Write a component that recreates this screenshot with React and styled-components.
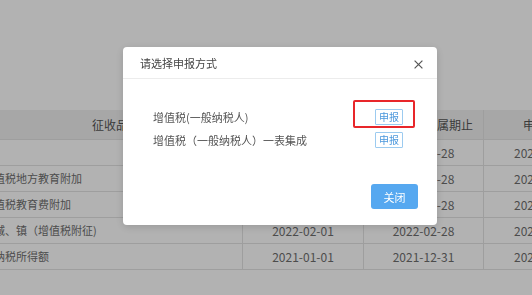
import React from "react";
import styled, { createGlobalStyle } from "styled-components";

const Global = createGlobalStyle`
  html, body { margin: 0; padding: 0; background: #fff; overflow: hidden; }
  body { font-family: "Noto Sans CJK SC", "Noto Sans", sans-serif; }
`;

const Page = styled.div`
  width: 532px;
  height: 295px;
  padding-top: 110px;
  box-sizing: border-box;
  overflow: hidden;
`;

const Table = styled.div`
  margin-left: -4px;
  width: 620px;
  display: grid;
  grid-template-columns: 247px 121px 120px 132px;
`;

const HeadCell = styled.div`
  height: 29px;
  background: #f0f0f0;
  border-bottom: 1px solid #e3e3e3;
  border-right: ${(p) => (p.$divider ? "1px solid #e3e3e3" : "none")};
  font-size: 12px;
  color: #555;
  line-height: 29px;
  white-space: nowrap;
  overflow: hidden;
  box-sizing: content-box;
  text-align: ${(p) => p.$align || "center"};
  padding-left: ${(p) => p.$pl || 0}px;
  padding-right: ${(p) => p.$pr || 0}px;
`;

const Cell = styled.div`
  height: 25px;
  border-bottom: 1px solid #e3e3e3;
  border-right: ${(p) => (p.$divider ? "1px solid #e3e3e3" : "none")};
  font-size: ${(p) => p.$fs || 12}px;
  color: #6e6e6e;
  line-height: 25px;
  white-space: nowrap;
  overflow: hidden;
  text-align: ${(p) => p.$align || "center"};
  padding-left: ${(p) => p.$pl || 0}px;
  text-indent: ${(p) => p.$indent || 0}px;
`;

const Overlay = styled.div`
  position: fixed;
  inset: 0;
  background: rgba(0, 0, 0, 0.3);
`;

const Modal = styled.div`
  position: absolute;
  left: 123px;
  top: 47px;
  width: 314px;
  height: 178px;
  background: #fff;
  border-radius: 4px;
  box-shadow: 0 2px 8px rgba(0, 0, 0, 0.15);
  display: flex;
  flex-direction: column;
`;

const ModalHeader = styled.div`
  height: 31px;
  border-bottom: 1px solid #ececec;
  display: flex;
  align-items: center;
  justify-content: space-between;
  padding: 0 14px 0 17px;
`;

const Title = styled.span`
  font-size: 11px;
  color: #444;
`;

const CloseIcon = styled.svg`
  width: 9px;
  height: 9px;
  margin-top: 3px;
`;

const ModalBody = styled.div`
  padding: 26px 34px 0 30px;
  display: flex;
  flex-direction: column;
`;

const OptionRow = styled.div`
  height: 23px;
  display: flex;
  align-items: center;
  justify-content: space-between;
`;

const OptionLabel = styled.span`
  font-size: 11px;
  color: #555;
`;

const ButtonWrap = styled.span`
  position: relative;
  display: inline-flex;
`;

const ReportButton = styled.button`
  width: 28px;
  height: 16px;
  padding: 0;
  border: 1px solid #9ccbf0;
  border-radius: 1px;
  background: #fff;
  color: #4a97dc;
  font-family: inherit;
  font-size: 10px;
  line-height: 14px;
`;

const Highlight = styled.span`
  position: absolute;
  left: -22px;
  top: -9px;
  width: 62px;
  height: 28px;
  border: 2px solid #e8262a;
  border-radius: 2px;
  box-sizing: border-box;
  pointer-events: none;
`;

const Footer = styled.div`
  margin-top: auto;
  padding: 0 19px 16px;
  display: flex;
  justify-content: flex-end;
`;

const CloseButton = styled.button`
  width: 47px;
  height: 25px;
  border: none;
  border-radius: 3px;
  background: #56a8f0;
  color: #fff;
  font-family: inherit;
  font-size: 11px;
  padding: 0;
`;

const rows = [
  { name: "", start: "2022-02-01", end: "2022-02-28", due: "2022-03-15" },
  { name: "值税地方教育附加", start: "2022-02-01", end: "2022-02-28", due: "2022-03-15" },
  { name: "值税教育费附加", start: "2022-02-01", end: "2022-02-28", due: "2022-03-15" },
  { name: "城、镇（增值税附征)", start: "2022-02-01", end: "2022-02-28", due: "2022-03-15" },
  { name: "纳税所得额", start: "2021-01-01", end: "2021-12-31", due: "2022-05-31" },
];

export default function App() {
  return (
    <>
      <Global />
      <Page>
        <Table>
          <HeadCell $align="left" $pl={96}>征收品目</HeadCell>
          <HeadCell $divider>税款所属期起</HeadCell>
          <HeadCell $divider $align="right" $pr={10}>所属期止</HeadCell>
          <HeadCell $align="left" $pl={39}>申报期限</HeadCell>
          {rows.map((r, i) => (
            <React.Fragment key={i}>
              <Cell $align="left" $fs={11} $indent={-2} $divider>{r.name}</Cell>
              <Cell $divider>{r.start}</Cell>
              <Cell $divider>{r.end}</Cell>
              <Cell $align="left" $pl={30}>{r.due}</Cell>
            </React.Fragment>
          ))}
        </Table>
      </Page>
      <Overlay>
        <Modal>
          <ModalHeader>
            <Title>请选择申报方式</Title>
            <CloseIcon viewBox="0 0 9 9">
              <path d="M0.6 0.6 L8.4 8.4 M8.4 0.6 L0.6 8.4" stroke="#555" strokeWidth="1.2" fill="none" />
            </CloseIcon>
          </ModalHeader>
          <ModalBody>
            <OptionRow>
              <OptionLabel>增值税(一般纳税人)</OptionLabel>
              <ButtonWrap>
                <ReportButton>申报</ReportButton>
                <Highlight />
              </ButtonWrap>
            </OptionRow>
            <OptionRow>
              <OptionLabel>增值税（一般纳税人）一表集成</OptionLabel>
              <ButtonWrap>
                <ReportButton>申报</ReportButton>
              </ButtonWrap>
            </OptionRow>
          </ModalBody>
          <Footer>
            <CloseButton>关闭</CloseButton>
          </Footer>
        </Modal>
      </Overlay>
    </>
  );
}
